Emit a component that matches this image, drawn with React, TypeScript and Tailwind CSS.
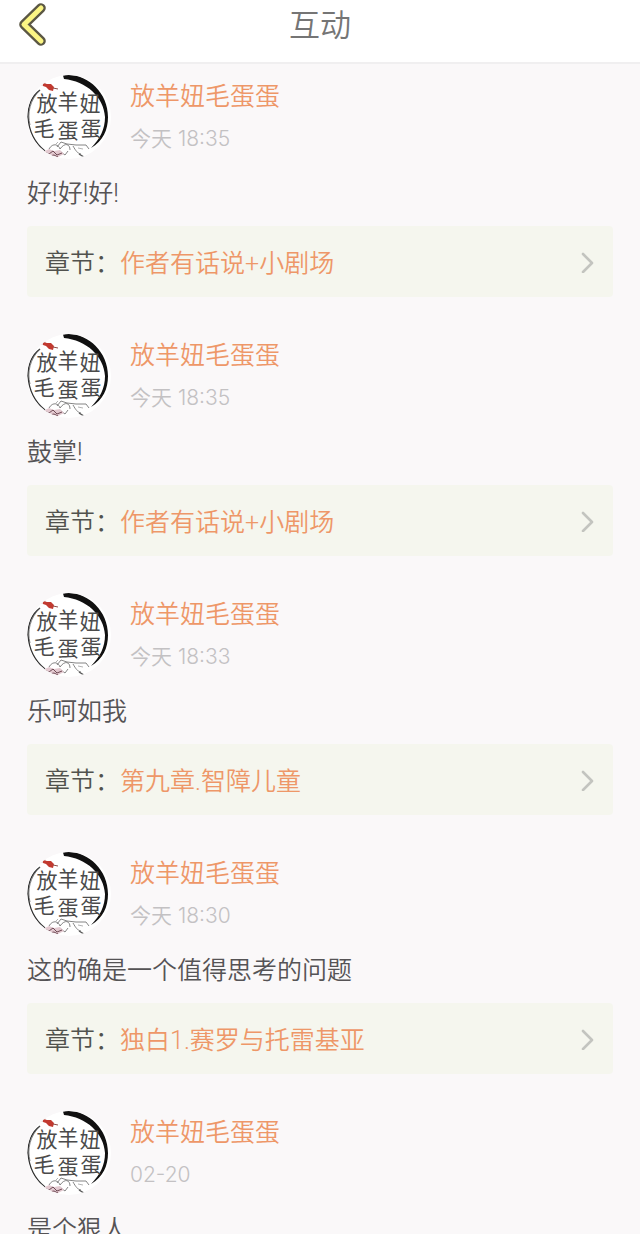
type Comment = { id: number; user: string; time: string; text: string; chapter?: string };

const comments: Comment[] = [
  { id: 1, user: "放羊妞毛蛋蛋", time: "今天 18:35", text: "好!好!好!", chapter: "作者有话说+小剧场" },
  { id: 2, user: "放羊妞毛蛋蛋", time: "今天 18:35", text: "鼓掌!", chapter: "作者有话说+小剧场" },
  { id: 3, user: "放羊妞毛蛋蛋", time: "今天 18:33", text: "乐呵如我", chapter: "第九章.智障儿童" },
  { id: 4, user: "放羊妞毛蛋蛋", time: "今天 18:30", text: "这的确是一个值得思考的问题", chapter: "独白1.赛罗与托雷基亚" },
  { id: 5, user: "放羊妞毛蛋蛋", time: "02-20", text: "是个狠人" },
];

const BackIcon = () => (
  <svg viewBox="0 0 32 48" className="w-8 h-12" fill="none" strokeLinecap="round" strokeLinejoin="round" aria-hidden="true">
    <path d="M25 8 8 24.5 25 41" stroke="#5b5744" strokeWidth="9.6" />
    <path d="M25 8 8 24.5 25 41" stroke="#fbf584" strokeWidth="5" />
  </svg>
);

const ChevronIcon = () => (
  <svg viewBox="0 0 14 22" className="w-[14px] h-[22px] shrink-0" fill="none" aria-hidden="true">
    <path d="M2 3 11 12 2 21" stroke="#c3c4bf" strokeWidth="2.6" strokeLinecap="round" strokeLinejoin="round" />
  </svg>
);

// Ink ring with the reader's name brushed inside it
const Avatar = () => (
  <svg viewBox="0 0 84 84" className="size-[84px] shrink-0 rounded-full bg-white" aria-hidden="true">
    {/* ring */}
    <path d="M36 .5C58-3 81 16 81 42 81 55 76 66 64 73 73 64 78 54 78 42 77 22 59 6 37 4Z" fill="#111" />
    <path d="M13 15C5 21 1 31 1 42 2 57 8 68 18 76" fill="none" stroke="#333" strokeWidth="1.3" />
    <path d="M13 15C3 25 0 38 3 50" fill="none" stroke="#555" strokeWidth=".7" />
    {/* goldfish */}
    <path d="M8 7 12 3 17 5 19 9 17 11 11 10Z" fill="#dcc9c4" />
    <path d="M10 4 15 3 17 6 13 7Z" fill="#a85148" />
    <path d="M16 8 20 9 24 9 27 12 26 16 22 15 19 12 16 11Z" fill="#c23a30" />
    <path d="M6 11 13 10M12 7 17 6M26 13 31 14M9 8 11 10" stroke="#8e4c46" strokeWidth="1" />
    {/* name */}
    <g fill="#4b4b4b" fontSize="21" fontWeight="400" textAnchor="middle">
      <text x="20" y="36">放</text>
      <text x="41" y="34">羊</text>
      <text x="63" y="36">妞</text>
      <text x="17" y="61">毛</text>
      <text x="41" y="63">蛋</text>
      <text x="64" y="61">蛋</text>
    </g>
    {/* blossom */}
    <g fill="none" stroke="#777" strokeWidth=".9">
      <path d="M22 74C26 67 32 70 33 74 38 67 43 69 43 75M30 72 34 67 40 69 49 70 59 70 62 74" />
      <path d="M46 71C49 76 50 78 54 79M34 77 38 80 41 76" />
      <path d="M28 70 31 67M51 73 56 74" stroke="#aaa" />
    </g>
    <path d="M52 79 57 82 63 81M66 78 67 80" fill="none" stroke="#555" strokeWidth="1.4" />
    <path d="M16 77 22 74 27 76 33 75 37 79 31 82 25 81 18 81Z" fill="#e3c9d0" />
    <path d="M17 77 22 79 26 76 30 80 35 78M18 80 22 81 27 80 31 82" stroke="#6e4b55" strokeWidth="1" fill="none" />
    <path d="M79 68 80 70" stroke="#777" strokeWidth="1" />
  </svg>
);

const CommentItem = ({ item }: { item: Comment }) => (
  <li>
    <div className="flex items-center gap-[19px]">
      <Avatar />
      <div className="flex flex-col gap-2">
        <a href="#user" className="text-[25px] leading-9 text-[#ee9768]">{item.user}</a>
        <time className="font-['Inter','Noto_Sans_CJK_SC',sans-serif] text-[21px] leading-8 text-[#c3c1c3]">{item.time}</time>
      </div>
    </div>
    <p className="mt-[15px] text-[25px] leading-10 text-[#555355]">{item.text}</p>
    {item.chapter && (
      <a
        href="#chapter"
        className="mt-3 flex h-[71px] items-center rounded-sm bg-[#f5f6ee] px-[18px] text-[25px]"
      >
        <span className="pt-1 text-[#51524d]">章节：</span>
        <span className="flex-1 pt-1 text-[#ee9768]">{item.chapter}</span>
        <ChevronIcon />
      </a>
    )}
  </li>
);

export default function App() {
  return (
    <div className="h-screen overflow-hidden bg-[#faf8f9] font-[350] font-['Roboto','Noto_Sans_CJK_SC',sans-serif]">
      <header className="grid grid-cols-[1fr_auto_1fr] items-start border-b-2 border-[#f0eff0] bg-white px-4">
        <button type="button" aria-label="返回" className="w-8">
          <BackIcon />
        </button>
        <h1 className="pt-1 pb-[14px] text-[31px] leading-[44px] text-[#757575]">互动</h1>
      </header>
      <ul className="flex flex-col gap-[37px] px-[27px] pt-[11px]">
        {comments.map((item) => (
          <CommentItem key={item.id} item={item} />
        ))}
      </ul>
    </div>
  );
}
